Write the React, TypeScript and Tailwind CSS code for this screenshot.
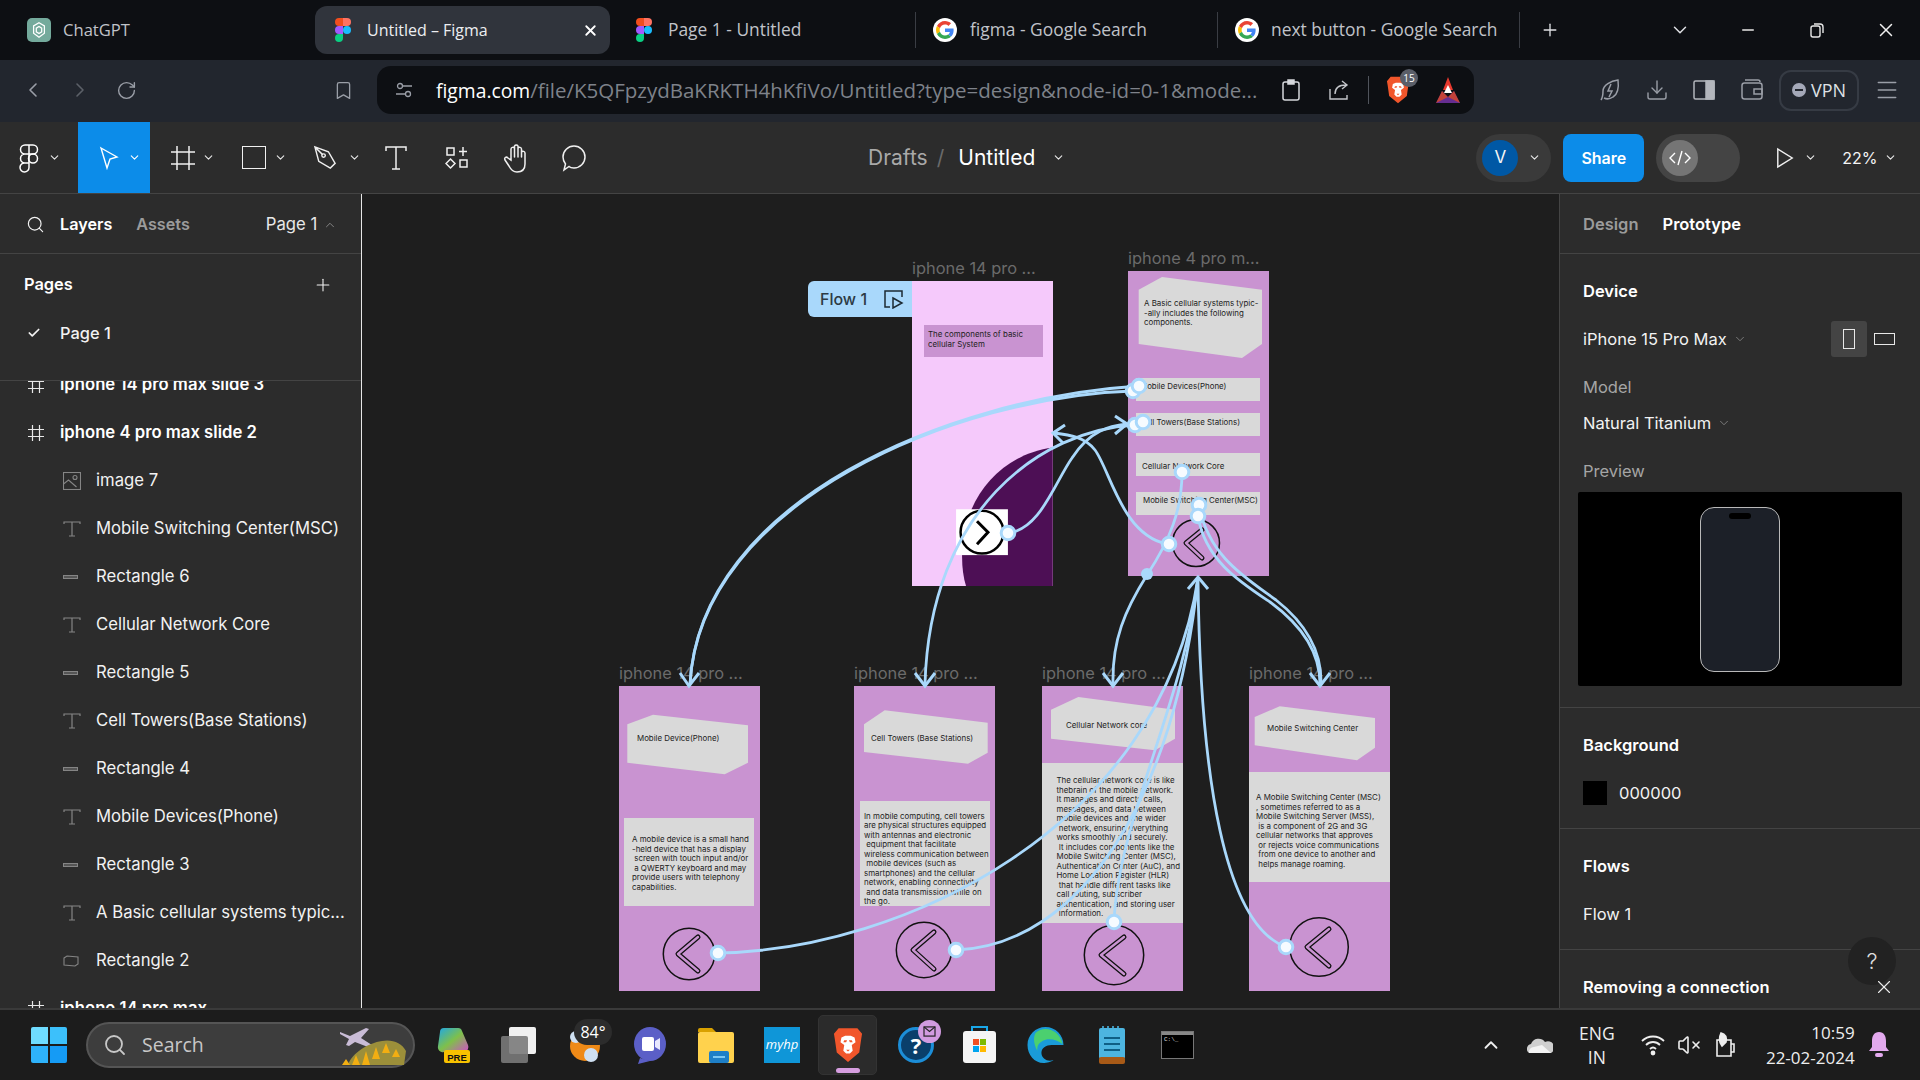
import {
  Bookmark,
  Check,
  ChevronDown,
  ChevronLeft,
  ChevronRight,
  ChevronUp,
  Download,
  Menu,
  Minus,
  Plus,
  RotateCw,
  Search,
  VolumeX,
  X,
} from "lucide-react";

const figmaLogo = (
  <svg viewBox="0 0 38 57" className="h-[24px] w-[16px] shrink-0">
    <path fill="#1abcfe" d="M19 28.5a9.5 9.5 0 1 1 19 0 9.5 9.5 0 0 1-19 0z" />
    <path fill="#0acf83" d="M0 47.5A9.5 9.5 0 0 1 9.5 38H19v9.5a9.5 9.5 0 1 1-19 0z" />
    <path fill="#ff7262" d="M19 0v19h9.5a9.5 9.5 0 1 0 0-19H19z" />
    <path fill="#f24e1e" d="M0 9.5A9.5 9.5 0 0 0 9.5 19H19V0H9.5A9.5 9.5 0 0 0 0 9.5z" />
    <path fill="#a259ff" d="M0 28.5A9.5 9.5 0 0 0 9.5 38H19V19H9.5A9.5 9.5 0 0 0 0 28.5z" />
  </svg>
);

const googleLogo = (
  <svg viewBox="-8 -8 64 64" className="h-[24px] w-[24px] shrink-0 rounded-full bg-white">
    <path fill="#EA4335" d="M24 9.5c3.54 0 6.71 1.22 9.21 3.6l6.85-6.85C35.9 2.38 30.47 0 24 0 14.62 0 6.51 5.38 2.56 13.22l7.98 6.19C12.43 13.72 17.74 9.5 24 9.5z" />
    <path fill="#4285F4" d="M46.98 24.55c0-1.57-.15-3.09-.38-4.55H24v9.02h12.94c-.58 2.96-2.26 5.48-4.78 7.18l7.73 6c4.51-4.18 7.09-10.36 7.09-17.65z" />
    <path fill="#FBBC05" d="M10.53 28.59c-.48-1.45-.76-2.99-.76-4.59s.27-3.14.76-4.59l-7.98-6.19C.92 16.46 0 20.12 0 24c0 3.88.92 7.54 2.56 10.78l7.97-6.19z" />
    <path fill="#34A853" d="M24 48c6.48 0 11.93-2.13 15.89-5.81l-7.73-6c-2.15 1.45-4.92 2.3-8.16 2.3-6.26 0-11.57-4.22-13.47-9.91l-7.98 6.19C6.51 42.62 14.62 48 24 48z" />
  </svg>
);

const braveMark = (
  <svg viewBox="0 0 32 38" className="h-full w-full">
    <path fill="#f1562b" d="M6 1h20l5 6-1 6-2 14-12 10L4 27 2 13 1 7z" />
    <path fill="#fff" d="M9 11l4-2h6l4 2 1 5-4 3 1 6-3 3h-4l-3-3 1-6-4-3z" />
    <path fill="#f1562b" d="M12 14h3l-1 2h-3zM17 14h3l1 2h-3zM14 24h4l-2 2z" />
  </svg>
);

const hashIcon = (
  <svg viewBox="0 0 16 16" className="h-[16px] w-[16px]" fill="none" stroke="#e8e8e8" strokeWidth="1.2">
    <path d="M4.5 0v16M11.5 0v16M0 4.5h16M0 11.5h16" />
  </svg>
);

const tIcon = (
  <svg viewBox="0 0 18 16" className="h-[16px] w-[18px]" fill="none" stroke="#858585" strokeWidth="1.2">
    <path d="M1 3V1h16v2M9 1v14M6 15h6" />
  </svg>
);

const lineIcon = <div className="h-[4px] w-[15px] border border-[#858585] bg-[#555]" />;

const polyIcon = (
  <svg viewBox="0 0 16 12" className="h-[12px] w-[16px]" fill="none" stroke="#858585" strokeWidth="1.1">
    <path d="M1 3l3-2 11 1v7l-3 2-11-1z" />
  </svg>
);

const imageIcon = (
  <svg viewBox="0 0 18 18" className="h-[18px] w-[18px]" fill="none" stroke="#858585" strokeWidth="1.1">
    <rect x=".5" y=".5" width="17" height="17" />
    <circle cx="12" cy="5.5" r="2" />
    <path d="M.5 12l5-4 8 7" />
  </svg>
);

const layerRows = [
  { top: true, icon: hashIcon, name: "iphone 14 pro max slide 3" },
  { top: true, icon: hashIcon, name: "iphone 4 pro max slide 2" },
  { icon: imageIcon, name: "image 7" },
  { icon: tIcon, name: "Mobile Switching Center(MSC)" },
  { icon: lineIcon, name: "Rectangle 6" },
  { icon: tIcon, name: "Cellular Network Core" },
  { icon: lineIcon, name: "Rectangle 5" },
  { icon: tIcon, name: "Cell Towers(Base Stations)" },
  { icon: lineIcon, name: "Rectangle 4" },
  { icon: tIcon, name: "Mobile Devices(Phone)" },
  { icon: lineIcon, name: "Rectangle 3" },
  { icon: tIcon, name: "A Basic cellular systems typic..." },
  { icon: polyIcon, name: "Rectangle 2" },
  { top: true, icon: hashIcon, name: "iphone 14 pro max" },
];

const TabBar = () => (
  <div className="flex h-[60px] items-center bg-[#0d0f13] font-['Open_Sans',sans-serif] text-[17.4px] text-[#c0c3c9]">
    <div className="flex w-[315px] items-center pl-[27px]">
      <div className="flex h-[24px] w-[24px] items-center justify-center rounded-[5px] bg-[#74aa9c]">
        <svg viewBox="0 0 20 20" className="h-[18px] w-[18px]" fill="none" stroke="#fff" strokeWidth="1.4">
          <path d="M10 2l6 3.5v8L10 18l-6-4.5v-8z" />
          <path d="M10 6l3 2v4l-3 2-3-2V8z" />
        </svg>
      </div>
      <span className="ml-[12px] text-[16.6px]">ChatGPT</span>
    </div>
    <div className="flex h-[48px] w-[295px] items-center rounded-[12px] bg-[#30343c] pl-[20px] text-[16px] text-[#eceef1]">
      {figmaLogo}
      <span className="ml-[16px]">Untitled – Figma</span>
      <X size={17} strokeWidth={2.6} className="ml-auto mr-[11px] text-white" />
    </div>
    <div className="flex w-[305px] items-center pl-[26px]">
      {figmaLogo}
      <span className="ml-[16px] -translate-y-[1px]">Page 1 - Untitled</span>
    </div>
    <div className="flex h-[36px] w-[302px] items-center border-l border-[#3a3d44] pl-[17px]">
      {googleLogo}
      <span className="ml-[13px] -translate-y-[1px]">figma - Google Search</span>
    </div>
    <div className="flex h-[36px] w-[302px] items-center border-l border-[#3a3d44] pl-[17px]">
      {googleLogo}
      <span className="ml-[12px] -translate-y-[1px]">next button - Google Search</span>
    </div>
    <div className="flex h-[36px] w-[150px] items-center border-l border-[#3a3d44] pl-[20px]">
      <Plus size={20} strokeWidth={1.6} className="text-[#dfe1e5]" />
    </div>
    <ChevronDown size={22} strokeWidth={1.6} className="text-[#dfe1e5]" />
    <Minus size={18} strokeWidth={2} className="ml-[48px] text-[#e8e8e8]" />
    <svg viewBox="0 0 16 16" className="ml-[52px] h-[16px] w-[16px]" fill="none" stroke="#e8e8e8" strokeWidth="1.4">
      <rect x="2" y="4" width="9" height="11" rx="2" />
      <path d="M5 2h6a3 3 0 0 1 3 3v6" />
    </svg>
    <X size={22} strokeWidth={1.6} className="ml-[50px] text-[#f0f0f0]" />
  </div>
);

const AddressBar = () => (
  <div className="flex h-[62px] items-center bg-[#22262e] pb-[2px] font-['Open_Sans',sans-serif] text-[#9a9ea7]">
    <ChevronLeft size={24} strokeWidth={1.6} className="ml-[21px]" />
    <ChevronRight size={24} strokeWidth={1.6} className="ml-[23px] text-[#5c6068]" />
    <RotateCw size={21} strokeWidth={1.6} className="ml-[24px]" />
    <Bookmark size={21} strokeWidth={1.5} className="ml-[196px]" />
    <div className="ml-[23px] flex h-[48px] w-[1097px] items-center rounded-[14px] bg-[#0d0f13] pl-[18px]">
      <svg viewBox="0 0 18 18" className="h-[18px] w-[18px]" fill="none" stroke="#9a9ea7" strokeWidth="1.3">
        <circle cx="5" cy="5" r="2.5" />
        <circle cx="13" cy="13" r="2.5" />
        <path d="M8 5h9M1 13h9" />
      </svg>
      <span className="ml-[23px] w-[822px] whitespace-nowrap text-[20.5px] text-[#7e828a]">
        <span className="text-[19.3px] text-white">figma.com</span>
        /file/K5QFpzydBaKRKTH4hKfiVo/Untitled?type=design&amp;node-id=0-1&amp;mode...
      </span>
      <svg viewBox="0 0 18 22" className="ml-[24px] h-[22px] w-[18px]" fill="none" stroke="#d5d7db" strokeWidth="1.5">
        <rect x="1" y="3" width="16" height="18" rx="2" />
        <rect x="6" y="1" width="6" height="4" fill="#d5d7db" />
      </svg>
      <svg viewBox="0 0 22 22" className="ml-[28px] h-[22px] w-[22px]" fill="none" stroke="#c4c6cb" strokeWidth="1.4">
        <path d="M2 10v10h17v-4M7 15c0-6 4-9 11-9M14 2l5 4-5 4" />
      </svg>
      <div className="ml-[18px] h-[28px] w-px bg-[#50545c]" />
      <div className="relative ml-[17px] h-[28px] w-[24px]">
        {braveMark}
        <div className="absolute -right-[8px] -top-[7px] flex h-[18px] w-[18px] items-center justify-center rounded-full bg-[#5a5e68] text-[10px] text-white">
          15
        </div>
      </div>
      <svg viewBox="0 0 28 28" className="ml-[24px] h-[28px] w-[28px]">
        <path fill="#e8392e" d="M14 1l5 13H9z" />
        <path fill="#fff" d="M14 9l4 8h-8z" />
        <path fill="#662d91" d="M2 27l6-12 6 6 6-6 6 12z" />
        <path fill="#ff5000" d="M8 15l6 6-12 6zM20 15l-6 6 12 6z" opacity=".6" />
      </svg>
    </div>
    <svg viewBox="0 0 22 24" className="ml-[125px] h-[24px] w-[22px]" fill="none" stroke="#9a9ea7" strokeWidth="1.5">
      <path d="M2 22c2-3 2-5 2-9 0-6 8-10 15-11 1 8 0 14-5 17-3 2-7 2-9 1M12 6l-3 7h4l-3 6" />
    </svg>
    <Download size={24} strokeWidth={1.4} className="ml-[24px]" />
    <svg viewBox="0 0 22 22" className="ml-[24px] h-[22px] w-[22px]" fill="none" stroke="#b3b6bc" strokeWidth="1.5">
      <rect x="1" y="2" width="20" height="18" rx="1.5" />
      <rect x="13" y="2" width="8" height="18" fill="#b3b6bc" />
    </svg>
    <svg viewBox="0 0 22 22" className="ml-[26px] h-[22px] w-[22px]" fill="none" stroke="#9a9ea7" strokeWidth="1.5">
      <rect x="1" y="4" width="20" height="16" rx="2.5" />
      <path d="M4 1h13a2 2 0 0 1 2 2M13 10h8v5h-8z" />
    </svg>
    <div className="ml-[16px] flex h-[41px] w-[80px] items-center justify-center rounded-[12px] border-2 border-[#363b44] text-[18px] text-[#dfe1e5]">
      <div className="mr-[5px] flex h-[14px] w-[14px] items-center justify-center rounded-full bg-[#a4a8b8]">
        <div className="h-[2px] w-[8px] bg-[#22262e]" />
      </div>
      VPN
    </div>
    <Menu size={26} strokeWidth={1.4} className="ml-[15px]" />
  </div>
);

const chev = "text-[#e8e8e8]";

const FigmaBar = () => (
  <div className="flex h-[72px] items-center border-b border-[#444] bg-[#2c2c2c] text-[#f5f5f5]">
    <div className="flex w-[78px] items-center pl-[19px]">
      <svg viewBox="0 0 20 30" className="h-[30px] w-[20px]" fill="none" stroke="#fff" strokeWidth="1.5">
        <path d="M10 2H6a4.5 4.5 0 0 0 0 9h4zM10 2h4a4.5 4.5 0 0 1 0 9h-4zM10 11H6a4.5 4.5 0 0 0 0 9h4zM10 20H6a4.5 4.5 0 1 0 4 4.5z" />
        <circle cx="14" cy="15.5" r="4.5" />
      </svg>
      <ChevronDown size={13} strokeWidth={2} className={`ml-[9px] ${chev}`} />
    </div>
    <div className="flex h-[71px] w-[72px] items-center bg-[#0c8ce9] pl-[21px]">
      <svg viewBox="0 0 20 24" className="h-[24px] w-[20px]" fill="none" stroke="#fff" strokeWidth="1.4">
        <path d="M2 2l16 9-7 2-3 9z" />
      </svg>
      <ChevronDown size={13} strokeWidth={2} className="ml-[9px] text-white" />
    </div>
    <div className="ml-[21px] flex items-center">
      <svg viewBox="0 0 24 24" className="h-[24px] w-[24px]" fill="none" stroke="#f0f0f0" strokeWidth="1.5">
        <path d="M6 0v24M18 0v24M0 6h24M0 18h24" />
      </svg>
      <ChevronDown size={13} strokeWidth={2} className={`ml-[7px] ${chev}`} />
    </div>
    <div className="ml-[27px] flex items-center">
      <div className="h-[23px] w-[24px] border-[1.5px] border-[#f0f0f0]" />
      <ChevronDown size={13} strokeWidth={2} className={`ml-[8px] ${chev}`} />
    </div>
    <div className="ml-[26px] flex items-center">
      <svg viewBox="0 0 26 26" className="h-[25px] w-[25px]" fill="none" stroke="#f0f0f0" strokeWidth="1.5">
        <path d="M2 2l14 5 7 12-5 5-12-7zM2 2l8 8" />
        <circle cx="11" cy="11" r="1.8" />
      </svg>
      <ChevronDown size={13} strokeWidth={2} className={`ml-[10px] ${chev}`} />
    </div>
    <svg viewBox="0 0 22 24" className="ml-[24px] h-[24px] w-[22px]" fill="none" stroke="#f0f0f0" strokeWidth="1.5">
      <path d="M1 5V1h20v4M11 1v22M7 23h8" />
    </svg>
    <svg viewBox="0 0 24 24" className="ml-[38px] h-[24px] w-[24px]" fill="none" stroke="#f0f0f0" strokeWidth="1.5">
      <rect x="2" y="2" width="7" height="7" />
      <path d="M18 1v9M14 5.5h8M5.5 13l4.5 4.5L5.500 22 1 17.500z" />
      <rect x="15" y="14" width="7" height="7" />
    </svg>
    <svg viewBox="0 0 26 30" className="ml-[34px] h-[30px] w-[26px]" fill="none" stroke="#f0f0f0" strokeWidth="1.5" strokeLinecap="round">
      <path d="M8 17V6a2 2 0 0 1 3.500-1V3a2 2 0 0 1 3.500 0v2a2 2 0 0 1 3.500 1v3a2 2 0 0 1 3.500 1v11c0 5-3 8-8 8-4 0-6-2-8-6l-4-6c-1-2 1-4 3-2zM11.500 5v9M15 4v10M18.500 6v8" />
    </svg>
    <svg viewBox="0 0 26 28" className="ml-[32px] h-[28px] w-[26px]" fill="none" stroke="#f0f0f0" strokeWidth="1.5">
      <path d="M13 2c6 0 11 5 11 11s-5 11-11 11c-2 0-4-.5-5-1.500L3 26l1.500-6C3 18 2 15.500 2 13 2 7 7 2 13 2z" />
    </svg>
    <span className="ml-[281px] text-[21px] text-[#a9a9a9]">Drafts</span>
    <span className="ml-[9px] text-[21px] text-[#6a6a6a]">/</span>
    <span className="ml-[14px] text-[21px] text-white">Untitled</span>
    <ChevronDown size={13} strokeWidth={2} className={`ml-[17px] ${chev}`} />
    <div className="ml-[411px] flex h-[48px] w-[75px] items-center rounded-full bg-[#3a3a3a] pl-[6px]">
      <div className="flex h-[36px] w-[36px] items-center justify-center rounded-full bg-[#0058a5] text-[17px]">V</div>
      <ChevronDown size={13} strokeWidth={2} className={`ml-[10px] ${chev}`} />
    </div>
    <div className="ml-[12px] flex h-[48px] w-[81px] items-center justify-center rounded-[8px] bg-[#0c8ce9] text-[16px] font-semibold text-white">
      Share
    </div>
    <div className="ml-[12px] flex h-[48px] w-[84px] items-center rounded-full bg-[#444] pl-[6px]">
      <div className="flex h-[36px] w-[36px] items-center justify-center rounded-full bg-[#757575]">
        <svg viewBox="0 0 24 16" className="h-[16px] w-[24px]" fill="none" stroke="#fff" strokeWidth="1.4">
          <path d="M7 3L2 8l5 5M17 3l5 5-5 5M14 1l-4 14" />
        </svg>
      </div>
    </div>
    <svg viewBox="0 0 20 24" className="ml-[36px] h-[24px] w-[18px]" fill="none" stroke="#f0f0f0" strokeWidth="1.6">
      <path d="M2 2l16 10L2 22z" />
    </svg>
    <ChevronDown size={13} strokeWidth={2} className={`ml-[10px] ${chev}`} />
    <span className="ml-[25px] text-[16px]">22%</span>
    <ChevronDown size={13} strokeWidth={2} className={`ml-[6px] ${chev}`} />
  </div>
);

const LeftPanel = () => (
  <div className="flex w-[362px] shrink-0 flex-col border-r border-[#e6e6e6] bg-[#2c2c2c] text-[16.7px] text-[#f2f2f2]">
    <div className="flex h-[60px] shrink-0 items-center border-b border-[#444] pl-[26px] pt-[2px] text-[16.2px]">
      <Search size={19} strokeWidth={1.5} />
      <span className="ml-[15px] font-semibold text-white">Layers</span>
      <span className="ml-[24px] font-semibold text-[#9b9b9b]">Assets</span>
      <span className="ml-[76px] text-[16.7px] text-[#e8e8e8]">Page 1</span>
      <ChevronUp size={14} strokeWidth={1.6} className="ml-[6px] text-[#8a8a8a]" />
    </div>
    <div className="flex h-[127px] shrink-0 flex-col border-b border-[#444]">
      <div className="flex h-[61px] items-center justify-between pl-[24px] pr-[28px]">
        <span className="text-[16.4px] font-semibold text-white">Pages</span>
        <Plus size={20} strokeWidth={1.3} />
      </div>
      <div className="flex h-[36px] items-center pl-[27px]">
        <Check size={14} strokeWidth={3} />
        <span className="ml-[19px] text-[16.4px] font-medium">Page 1</span>
      </div>
    </div>
    <div className="flex-1 overflow-hidden">
      <div className="-mt-[20px]">
        {layerRows.map((row, i) => (
          <div key={i} className={row.top ? "flex h-[48px] items-center pl-[28px]" : "flex h-[48px] items-center pl-[63px]"}>
            <div className={row.top ? "flex w-[32px] items-center" : "flex w-[33px] items-center"}>{row.icon}</div>
            <span className={row.top ? "font-semibold text-white" : "text-[#f2f2f2]"}>{row.name}</span>
          </div>
        ))}
      </div>
    </div>
  </div>
);

const RightPanel = () => (
  <div className="relative flex w-[361px] shrink-0 flex-col border-l border-[#444] bg-[#2c2c2c] text-[16.5px] text-[#f2f2f2]">
    <div className="flex h-[60px] items-center border-b border-[#444] pl-[23px] pt-[2px]">
      <span className="font-semibold text-[#9b9b9b]">Design</span>
      <span className="ml-[24px] font-semibold text-white">Prototype</span>
    </div>
    <div className="flex h-[454px] flex-col border-b border-[#444] pl-[23px]">
      <div className="mt-[19px] flex h-[36px] items-center font-semibold text-white">Device</div>
      <div className="mt-[12px] flex h-[36px] items-center">
        iPhone 15 Pro Max
        <ChevronDown size={14} strokeWidth={1.4} className="ml-[6px] text-[#8a8a8a]" />
        <div className="ml-[84px] flex h-[36px] w-[36px] items-center justify-center rounded-[3px] bg-[#444]">
          <div className="h-[20px] w-[12px] border-[1.5px] border-[#e8e8e8]" />
        </div>
        <div className="ml-[7px] h-[12px] w-[21px] border-[1.5px] border-[#e8e8e8]" />
      </div>
      <div className="mt-[18px] flex h-[24px] items-center text-[#a5a5a5]">Model</div>
      <div className="mt-[12px] flex h-[24px] items-center">
        Natural Titanium
        <ChevronDown size={14} strokeWidth={1.4} className="ml-[6px] text-[#8a8a8a]" />
      </div>
      <div className="mt-[24px] flex h-[24px] items-center text-[#a5a5a5]">Preview</div>
      <div className="-ml-[5px] mt-[9px] flex h-[194px] w-[324px] items-center justify-center rounded-[2px] bg-black">
        <div className="relative h-[165px] w-[80px] rounded-[14px] border border-[#b9b9b9] bg-[#1c2028]">
          <div className="absolute left-[28px] top-[5px] h-[6px] w-[22px] rounded-full bg-black" />
        </div>
      </div>
    </div>
    <div className="flex h-[121px] flex-col border-b border-[#444] pl-[23px]">
      <div className="mt-[25px] flex h-[24px] items-center font-semibold text-white">Background</div>
      <div className="mt-[24px] flex h-[24px] items-center">
        <div className="h-[24px] w-[24px] bg-black" />
        <span className="ml-[12px]">000000</span>
      </div>
    </div>
    <div className="flex h-[121px] flex-col border-b border-[#444] pl-[23px]">
      <div className="mt-[25px] flex h-[24px] items-center font-semibold text-white">Flows</div>
      <div className="mt-[24px] flex h-[24px] items-center">Flow 1</div>
    </div>
    <div className="mt-[25px] flex h-[24px] items-center pl-[23px] font-semibold text-white">Removing a connection</div>
    <div className="absolute left-[288px] top-[743px] flex h-[48px] w-[48px] items-center justify-center rounded-full bg-[#222] text-[22px] font-light text-[#ddd]">
      ?
    </div>
    <X size={22} strokeWidth={1.2} className="absolute left-[313px] top-[782px] text-[#eee]" />
  </div>
);

const rect = "absolute bg-[#d9d9d9]";
const label = "absolute whitespace-pre text-[7.9px] leading-[9.5px] text-[#222]";

// frame-relative drawing for the lower four screens
const screens = [
  {
    frame: "left-[257px] top-[492px]",
    poly: "8.300,38.300 34,28.700 129,39.300 129,76.700 105.700,88.300 8.300,76.700",
    head: "Mobile Device(Phone)",
    headPos: "left-[18px] top-[47.500px]",
    box: "left-[5px] top-[132px] h-[88px] w-[130px]",
    bodyPos: "left-[13px] top-[149px]",
    body: "A mobile device is a small hand\n-held device that has a display\n screen with touch input and/or\n a QWERTY keyboard and may\nprovide users with telephony\ncapabilities.",
    circle: [70, 268, 25.7],
    arrow: "M79 251L59 268L79 285",
  },
  {
    frame: "left-[492px] top-[492px]",
    poly: "10,38.300 30.700,24.300 133.700,36.700 133.700,66.700 114,77.700 10,66",
    head: "Cell Towers (Base Stations)",
    headPos: "left-[17px] top-[47.500px]",
    box: "left-[6px] top-[115px] h-[105px] w-[130px]",
    bodyPos: "left-[10px] top-[125.500px]",
    body: "In mobile computing, cell towers\nare physical structures equipped\nwith antennas and electronic\n equipment that facilitate\nwireless communication between\n mobile devices (such as\nsmartphones) and the cellular\nnetwork, enabling connectivity\n and data transmission while on\nthe go.",
    circle: [70, 264, 27.7],
    arrow: "M80 246L59 264L80 283",
  },
  {
    frame: "left-[680px] top-[492px]",
    poly: "9,23.700 36.300,11 133,23.700 133,52.700 113,64.300 9,52.700",
    head: "Cellular Network core",
    headPos: "left-[24px] top-[34.500px]",
    box: "left-0 top-[77px] h-[160px] w-[141px]",
    bodyPos: "left-[14.500px] top-[90px]",
    body: "The cellular network core is like\nthebrain of the mobile network.\nIt manages and directs calls,\nmessages, and data between\nmobile devices and the wider\n network, ensuring everything\nworks smoothly and securely.\n It includes components like the\nMobile Switching Center (MSC),\nAuthentication Center (AuC), and\nHome Location Register (HLR)\n that handle different tasks like\ncall routing, subscriber\nauthentication, and storing user\n information.",
    circle: [72, 269, 29.7],
    arrow: "M82 251L59 269L82 288",
  },
  {
    frame: "left-[887px] top-[492px]",
    poly: "5.700,31 30.700,20.300 126,32 126,61.700 108,74.300 5.700,59.300",
    head: "Mobile Switching Center",
    headPos: "left-[18px] top-[37.500px]",
    box: "left-0 top-[86px] h-[110px] w-[141px]",
    bodyPos: "left-[7px] top-[107px]",
    body: "A Mobile Switching Center (MSC)\n, sometimes referred to as a\nMobile Switching Server (MSS),\n is a component of 2G and 3G\ncellular networks that approves\n or rejects voice communications\n from one device to another and\n helps manage roaming.",
    circle: [70, 261, 29.3],
    arrow: "M80 243L58 261L80 280",
  },
];

const NavButton = ({ cx, cy, r, d }: { cx: number; cy: number; r: number; d: string }) => (
  <>
    <circle cx={cx} cy={cy} r={r} fill="none" stroke="#111" strokeWidth="1.5" />
    <path d={d} fill="none" stroke="#111" strokeWidth="5" strokeLinecap="round" strokeLinejoin="round" />
    <path d={d} fill="none" stroke="#c993d1" strokeWidth="2.400" strokeLinecap="round" strokeLinejoin="round" />
  </>
);

const frameBox = "absolute h-[305px] w-[141px]";
const frameTitle = "absolute whitespace-nowrap text-[16.4px] leading-[20px] text-[#6b6b6b]";

const wires = [
  "M1139 386C950 398 700 500 690 684",
  "M1133 391C960 396 700 500 690 684",
  "M1008 533C1040 530 1055 482 1072 458C1090 430 1110 426 1127 424",
  "M1135 425C1040 430 930 510 925 684",
  "M1167 544C1122 535 1110 470 1095 450C1085 437 1070 435 1054 433",
  "M1182 472C1182 510 1170 540 1147 575C1125 610 1112 640 1113 684",
  "M1198 516C1205 560 1240 582 1270 602C1300 624 1320 650 1320 684",
  "M1199 505C1208 556 1246 578 1276 600C1304 622 1322 650 1321 684",
  "M718 953C900 950 1160 830 1198 578",
  "M956 950C1080 945 1175 800 1198 578",
  "M1114 922C1118 820 1185 700 1198 578",
  "M1286 947C1225 925 1200 780 1198 578",
];

const arrows = [
  "M680 673L689 686L699 673",
  "M915 673L925 686L935 673",
  "M1103 673L1113 686L1123 673",
  "M1310 673L1320 686L1330 673",
  "M1188 589L1198 577L1208 589",
  "M1115 416L1127 424L1115 434",
  "M1065 425L1053 433L1063 443",
];

const nodes = [
  [1133, 391],
  [1139, 386],
  [1135, 425],
  [1143, 422],
  [1182, 472],
  [1199, 505],
  [1198, 516],
  [1169, 544],
  [1008, 533],
  [718, 953],
  [956, 950],
  [1114, 922],
  [1286, 947],
];

const Canvas = () => (
  <div className="relative flex-1 overflow-hidden bg-[#1e1e1e]">
    {/* top left screen */}
    <div className={`${frameTitle} left-[550px] top-[64px]`}>iphone 14 pro ...</div>
    <div className="absolute left-[446px] top-[87px] flex h-[36px] w-[104px] items-center rounded-l-[6px] bg-[#a9d8fb] pl-[12px] text-[16px] font-medium text-[#2c3a44]">
      Flow 1
      <svg viewBox="0 0 20 20" className="ml-[17px] h-[20px] w-[20px]" fill="none" stroke="#1c2a33" strokeWidth="1.500">
        <path d="M6 18H1V2h17v6M9 9l9 5-9 5z" />
      </svg>
    </div>
    <div className={`${frameBox} left-[550px] top-[87px] bg-[#f5c9fb]`}>
      <svg viewBox="0 0 141 306" className="absolute inset-0 h-full w-full">
        <path d="M141 167C88 174 50 219 50 276Q50 294 54 306L141 306Z" fill="#4d0f55" />
        <rect x="44" y="229" width="52" height="46" fill="#fff" />
        <circle cx="70" cy="252" r="21.500" fill="none" stroke="#000" strokeWidth="2.500" />
        <path d="M65 241L76 252L65 264" fill="none" stroke="#000" strokeWidth="3" />
      </svg>
      <div className="absolute left-[12px] top-[44px] h-[32px] w-[119px] bg-[#c993d1]" />
      <div className={`${label} left-[16px] top-[49px]`}>{"The components of basic\ncellular System"}</div>
    </div>

    {/* top right screen */}
    <div className={`${frameTitle} left-[766px] top-[54px]`}>iphone 4 pro m...</div>
    <div className={`${frameBox} left-[766px] top-[77px] bg-[#c993d1]`}>
      <svg viewBox="0 0 141 305" className="absolute inset-0 h-full w-full">
        <polygon points="10.700,18.700 34,6 134,18.700 134,73 114,87 10.700,73" fill="#d9d9d9" />
        <NavButton cx={68} cy={272} r={23.500} d="M74 259L58 272L74 287" />
      </svg>
      <div className={`${label} left-[16px] top-[28px]`}>
        {"A Basic cellular systems typic-\n-ally includes the following\ncomponents."}
      </div>
      <div className={`${rect} left-[8px] top-[107px] h-[23px] w-[124px]`} />
      <div className={`${label} left-[12px] top-[111px]`}>Mobile Devices(Phone)</div>
      <div className={`${rect} left-[8px] top-[142px] h-[23px] w-[124px]`} />
      <div className={`${label} left-[12px] top-[147px]`}>Cell Towers(Base Stations)</div>
      <div className={`${rect} left-[8px] top-[182px] h-[23px] w-[124px]`} />
      <div className={`${label} left-[14px] top-[191px]`}>Cellular Network Core</div>
      <div className={`${rect} left-[8px] top-[221px] h-[23px] w-[124px]`} />
      <div className={`${label} left-[15px] top-[225px]`}>Mobile Switching Center(MSC)</div>
    </div>

    {/* lower four screens */}
    {screens.map((s) => (
      <div key={s.head}>
        <div className={`${frameTitle} ${s.frame} -translate-y-[23px]`}>iphone 14 pro ...</div>
        <div className={`${frameBox} ${s.frame} bg-[#c993d1]`}>
          <svg viewBox="0 0 141 305" className="absolute inset-0 h-full w-full">
            <polygon points={s.poly} fill="#d9d9d9" />
            <NavButton cx={s.circle[0]} cy={s.circle[1]} r={s.circle[2]} d={s.arrow} />
          </svg>
          <div className={`${label} ${s.headPos}`}>{s.head}</div>
          <div className={`${rect} ${s.box}`} />
          <div className={`${label} ${s.bodyPos}`}>{s.body}</div>
        </div>
      </div>
    ))}

    <svg viewBox="362 194 1197 814" className="pointer-events-none absolute left-0 top-0 h-[814px] w-[1197px]">
      <g fill="none" stroke="#a9d8fb" strokeWidth="2.800">
        {wires.map((d) => (
          <path key={d} d={d} />
        ))}
        {arrows.map((d) => (
          <path key={d} d={d} strokeWidth="3" />
        ))}
      </g>
      <circle cx="1147" cy="574" r="6" fill="#a9d8fb" />
      {nodes.map(([x, y]) => (
        <circle key={`${x}-${y}`} cx={x} cy={y} r="6.800" fill="#f6fbff" stroke="#a9d8fb" strokeWidth="3" />
      ))}
    </svg>
  </div>
);

const Taskbar = () => (
  <div className="flex h-[72px] shrink-0 items-center border-t-2 border-[#3a3a3a] bg-[#1c1c1c] font-['Open_Sans',sans-serif] text-[#eee]">
    <div className="ml-[31px] grid h-[36px] w-[36px] grid-cols-2 gap-[2px]">
      <div className="rounded-tl-[2px] bg-[#6fdcff]" />
      <div className="rounded-tr-[2px] bg-[#3cc0fb]" />
      <div className="rounded-bl-[2px] bg-[#2eb2fa]" />
      <div className="rounded-br-[2px] bg-[#159bf5]" />
    </div>
    <div className="relative ml-[19px] flex h-[46px] w-[329px] items-center rounded-full border-2 border-[#555] bg-[#3d3d3d] pl-[15px] text-[19.5px] text-[#c8c8c8]">
      <Search size={24} strokeWidth={1.8} />
      <span className="ml-[15px]">Search</span>
      <svg viewBox="0 0 72 42" className="absolute right-[3px] top-[1px] h-[42px] w-[72px]">
        <path d="M2 7l10 4 16-8 3 1-8 9 14 9-2 2-18-7-6 4-3-1 3-6-9-5z" fill="#c9bcd6" />
        <path d="M10 40c4-12 20-22 34-24 10-2 20 2 24 10l-2 14z" fill="#9c8f3a" />
        <path d="M8 34l4 6h-8zM18 30l4 10h-8zM28 26l4 14h-8zM38 22l4 12h-8zM48 18l4 10h-8zM58 24l4 8h-8z" fill="#f2ae12" />
      </svg>
    </div>
    <svg viewBox="0 0 36 36" className="ml-[20px] h-[36px] w-[36px]">
      <defs>
        <linearGradient id="cp" x1="0" y1="0" x2="1" y2="1">
          <stop offset="0" stopColor="#1ea8e8" />
          <stop offset=".5" stopColor="#7fc04a" />
          <stop offset="1" stopColor="#d14fc8" />
        </linearGradient>
      </defs>
      <path d="M9 1h14a4 4 0 0 1 4 3l6 14a5 5 0 0 1-4 7H9a5 5 0 0 1-6-6L5 5a4 4 0 0 1 4-4z" fill="url(#cp)" />
      <rect x="9" y="23" width="26" height="13" rx="2" fill="#f8c200" />
      <text x="22" y="33.500" textAnchor="middle" fontSize="9.500" fontWeight="700" fill="#111" fontFamily="Liberation Sans">
        PRE
      </text>
    </svg>
    <div className="relative ml-[30px] h-[36px] w-[36px]">
      <div className="absolute left-[8px] top-0 h-[27px] w-[27px] rounded-[2px] bg-[#f0f0f0]" />
      <div className="absolute left-0 top-[9px] h-[27px] w-[27px] rounded-[2px] bg-[#7a7a7a]/90" />
    </div>
    <div className="relative ml-[30px] h-[36px] w-[37px]">
      <svg viewBox="0 0 37 36" className="h-full w-full">
        <circle cx="18" cy="19" r="15" fill="#ef8a17" />
        <circle cx="24" cy="28" r="7" fill="#cfe0f2" />
        <circle cx="9" cy="10" r="6" fill="#cfe0f2" />
      </svg>
      <div className="absolute -right-[8px] -top-[8px] flex h-[26px] w-[38px] items-center justify-center rounded-full bg-[#2c2c2c] text-[16px] text-white">
        84°
      </div>
    </div>
    <svg viewBox="0 0 34 38" className="ml-[29px] h-[38px] w-[34px]">
      <ellipse cx="17" cy="18" rx="16" ry="17" fill="#5b5fc7" />
      <path d="M7 32l-2 6 12-3z" fill="#5b5fc7" />
      <rect x="9" y="11" width="12" height="14" rx="2" fill="#fff" />
      <path d="M22 15l5-3v12l-5-3z" fill="#e8e8ff" />
    </svg>
    <svg viewBox="0 0 37 36" className="ml-[30px] h-[36px] w-[37px]">
      <path d="M1 3a2 2 0 0 1 2-2h12l4 4H1z" fill="#d9a100" />
      <rect x="1" y="5" width="36" height="31" rx="2" fill="#ffd24d" />
      <rect x="12" y="24" width="20" height="12" rx="2" fill="#1e7fc7" />
      <rect x="16" y="29" width="12" height="2" fill="#7cc7f2" />
    </svg>
    <div className="ml-[30px] flex h-[36px] w-[36px] items-center justify-center bg-[#0f96d8] text-[13px] italic text-white">myhp</div>
    <div className="relative ml-[18px] flex h-[60px] w-[59px] items-center justify-center rounded-[5px] border border-[#333] bg-[#2b2b2b]">
      <div className="h-[36px] w-[30px]">{braveMark}</div>
      <div className="absolute bottom-[1px] left-[17px] h-[5px] w-[24px] rounded-full bg-[#d69ee0]" />
    </div>
    <div className="relative ml-[21px] flex h-[36px] w-[36px] items-center justify-center rounded-full border-[3px] border-[#1c8ed8] bg-[#0a3f6b] text-[22px] font-bold text-white">
      ?
      <div className="absolute -right-[10px] -top-[10px] flex h-[23px] w-[23px] items-center justify-center rounded-full bg-[#d19be0]">
        <svg viewBox="0 0 14 12" className="h-[11px] w-[13px]" fill="none" stroke="#222" strokeWidth="1.300">
          <rect x="1" y="1" width="12" height="10" />
          <path d="M1 1l6 5 6-5" />
        </svg>
      </div>
    </div>
    <svg viewBox="0 0 35 38" className="ml-[28px] h-[38px] w-[35px]">
      <path d="M10 6V1h15v5" fill="none" stroke="#19a7e8" strokeWidth="2" />
      <rect x="1" y="5" width="33" height="32" rx="3" fill="#f5f5f5" />
      <rect x="11" y="13" width="6" height="6" fill="#f25022" />
      <rect x="18" y="13" width="6" height="6" fill="#7fba00" />
      <rect x="11" y="20" width="6" height="6" fill="#00a4ef" />
      <rect x="18" y="20" width="6" height="6" fill="#ffb900" />
    </svg>
    <svg viewBox="0 0 36 36" className="ml-[30px] h-[36px] w-[37px]">
      <path d="M18 0C8 0 0 8 0 18c0 10 7 18 16 18 3 0 8-1 10-3-6 2-11-1-12-6-1-6 5-9 10-9h12C36 8 28 0 18 0z" fill="#1a9bd8" />
      <path d="M8 6c8-8 24-4 27 11-6-5-15-6-20-3-4 2-6 6-5 10-3-5-5-12-2-18z" fill="#4bd06f" />
    </svg>
    <svg viewBox="0 0 28 38" className="ml-[34px] h-[38px] w-[28px]">
      <rect x="1" y="2" width="26" height="31" rx="2" fill="#4db5e0" />
      <rect x="1" y="31" width="26" height="7" rx="2" fill="#a85a17" />
      <path d="M5 0v4M10 0v4M15 0v4M20 0v4" stroke="#4db5e0" strokeWidth="1.600" />
      <path d="M6 12h16M6 18h16M6 24h16" stroke="#0f5f85" strokeWidth="2" />
    </svg>
    <div className="ml-[35px] flex h-[28px] w-[33px] flex-col border border-[#777] bg-black">
      <div className="h-[3px] bg-[#888]" />
      <span className="pl-[2px] font-['Liberation_Mono',monospace] text-[6px] leading-[10px] text-[#ddd]">C:\_</span>
    </div>
    <ChevronUp size={22} strokeWidth={2} className="ml-[286px]" />
    <svg viewBox="0 0 26 18" className="ml-[25px] h-[18px] w-[26px]">
      <path d="M2 17a5 5 0 0 1 2-9 8 8 0 0 1 14-2 5 5 0 0 1 6 11z" fill="#cfcfcf" />
      <path d="M2 17a5 5 0 0 1 5-6l8-2 9 8z" fill="#f3f3f3" />
    </svg>
    <div className="ml-[26px] flex flex-col items-center text-[17.5px] leading-[24px]">
      <span>ENG</span>
      <span>IN</span>
    </div>
    <svg viewBox="0 0 24 24" className="ml-[26px] h-[24px] w-[24px]" fill="none" stroke="#eee" strokeWidth="1.800">
      <path d="M1 8c6-6 16-6 22 0M5 12c4-4 10-4 14 0M9 16c2-2 4-2 6 0" />
      <circle cx="12" cy="20" r="1.500" fill="#eee" />
    </svg>
    <VolumeX size={24} strokeWidth={1.6} className="ml-[12px]" />
    <svg viewBox="0 0 26 26" className="ml-[12px] h-[26px] w-[26px]" fill="none" stroke="#eee" strokeWidth="1.600">
      <path d="M4 24V8h14v16zM18 12h3v8h-3" />
      <path d="M8 1c4 1 6 4 5 9l-4 4C6 10 6 5 8 1z" fill="#eee" />
    </svg>
    <div className="ml-[12px] flex w-[104px] flex-col items-end text-[17px] leading-[25px]">
      <span>10:59</span>
      <span className="whitespace-nowrap">22-02-2024</span>
    </div>
    <svg viewBox="0 0 22 28" className="ml-[13px] h-[28px] w-[22px]" fill="#e3a9ee">
      <path d="M11 1c5 0 7 4 7 9v6l3 4H1l3-4v-6c0-5 2-9 7-9z" />
      <rect x="7" y="22" width="8" height="4" rx="2" />
    </svg>
  </div>
);

export default function App() {
  return (
    <div className="flex h-[1080px] w-[1920px] flex-col overflow-hidden bg-[#1e1e1e] font-['Inter',sans-serif]">
      <TabBar />
      <AddressBar />
      <FigmaBar />
      <div className="flex h-[814px] overflow-hidden">
        <LeftPanel />
        <Canvas />
        <RightPanel />
      </div>
      <Taskbar />
    </div>
  );
}
